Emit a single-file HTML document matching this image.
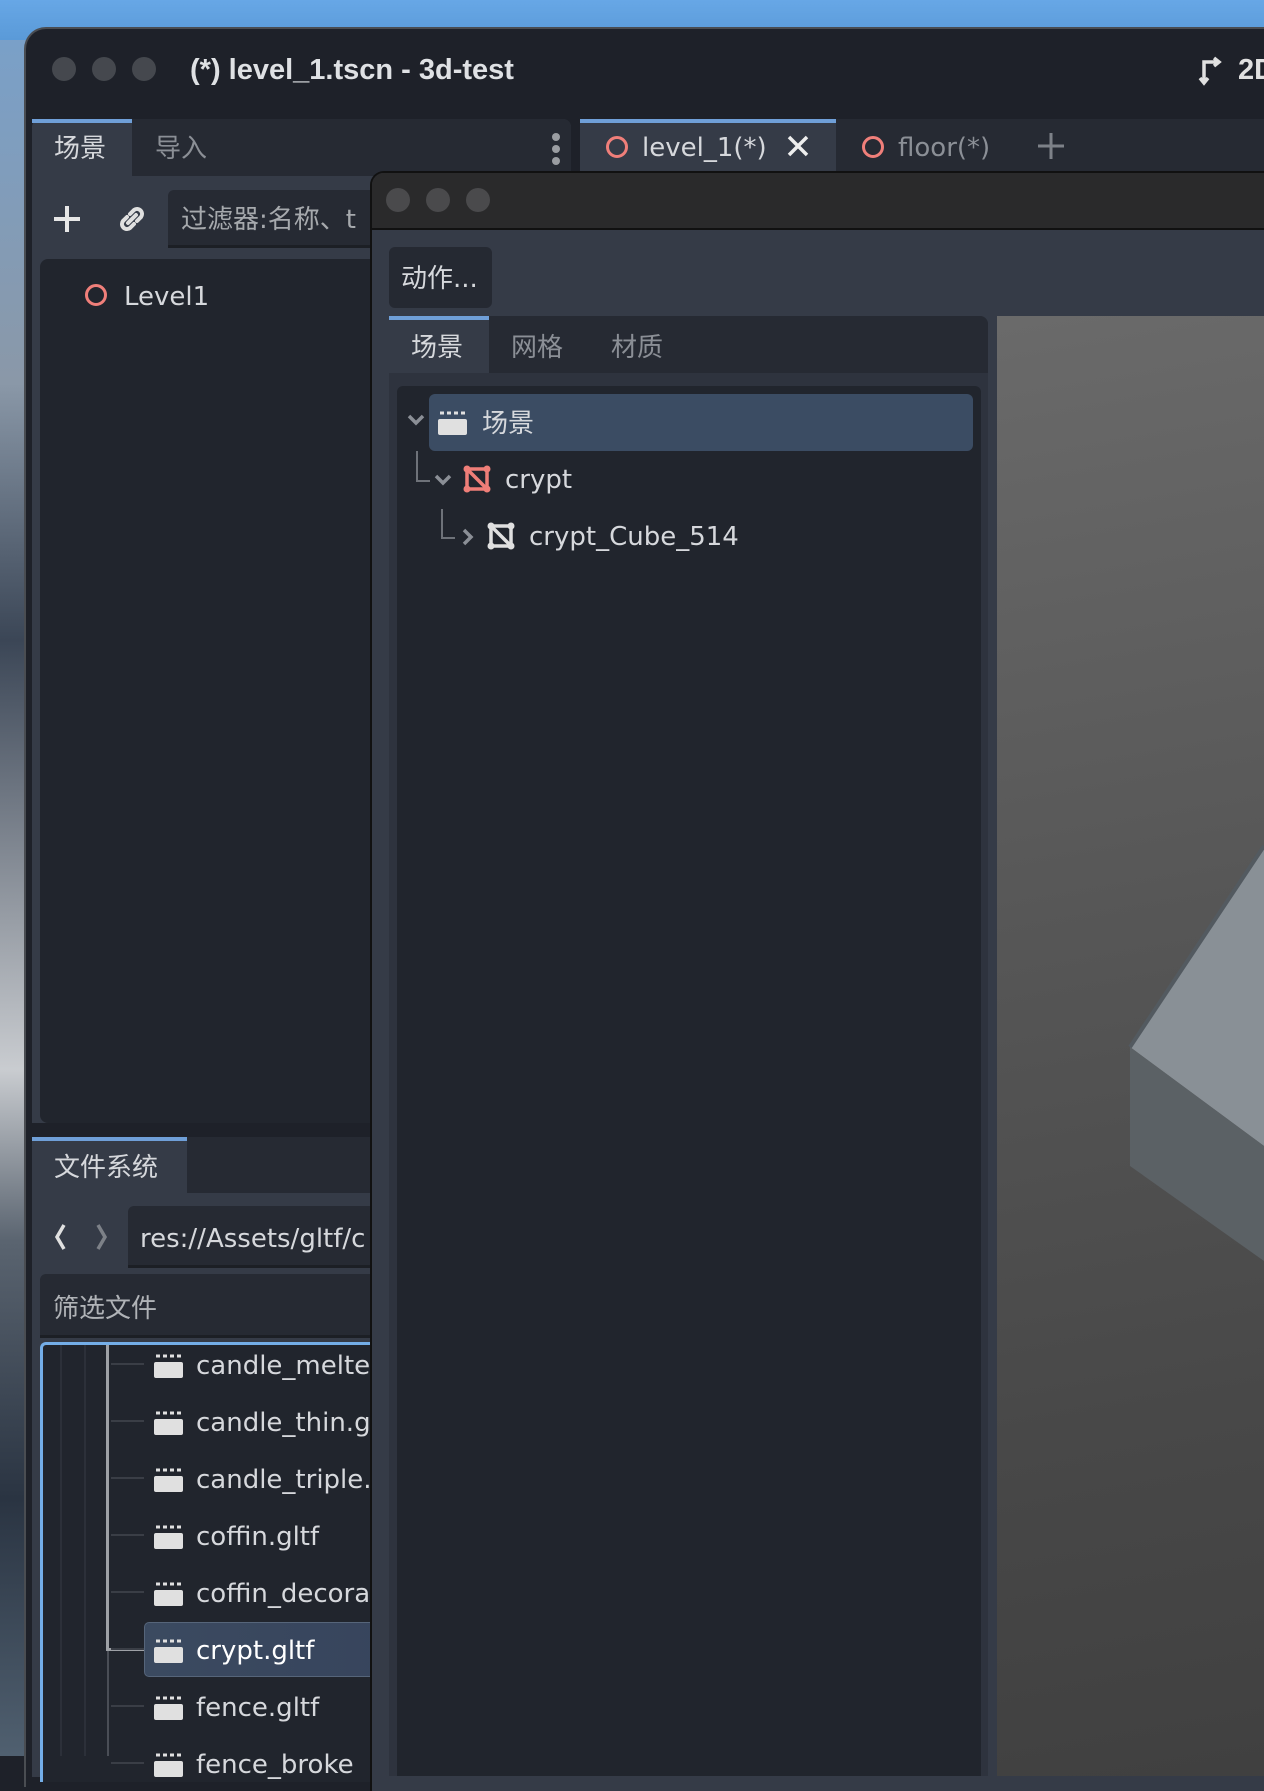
<!DOCTYPE html>
<html style="background:#1e2129"><head><meta charset="utf-8"><style>
*{margin:0;padding:0;box-sizing:border-box}
body{width:1264px;height:1756px;overflow:hidden;position:relative;font-family:"DejaVu Sans","Noto Sans CJK SC",sans-serif;background:#1e2129}
.a{position:absolute}
.t{position:absolute;white-space:nowrap;color:#d6d8dc;font-size:26px;line-height:30px}
.dim{color:#8b8f96}
.clap{position:absolute;width:29px;height:25px}
</style></head><body>
<div class="a" style="left:0;top:0;width:1264px;height:40px;background:linear-gradient(#67a7e6,#5a9ad8)"></div>
<div class="a" style="left:0;top:40px;width:30px;height:1716px;background:linear-gradient(180deg,#7aa0c8 0%,#8a98a8 20%,#3b4656 35%,#c9ccd0 60%,#5a6470 70%,#2a3442 85%,#506070 100%)"></div>
<div class="a" style="left:24px;top:27px;width:1260px;height:1760px;background:#1e2129;border-radius:22px 0 0 0;border:2px solid #4a4d52;border-right:none;border-bottom:none"></div>
<div class="a" style="left:52px;top:57px;width:24px;height:24px;border-radius:50%;background:#45484e"></div>
<div class="a" style="left:92px;top:57px;width:24px;height:24px;border-radius:50%;background:#45484e"></div>
<div class="a" style="left:132px;top:57px;width:24px;height:24px;border-radius:50%;background:#45484e"></div>
<div class="t" style="left:190px;top:55px;font-family:'Liberation Sans',sans-serif;font-weight:bold;font-size:29px;color:#dfe1e4">(*) level_1.tscn - 3d-test</div>
<svg class="a" style="left:1196px;top:56px" width="34" height="30" viewBox="0 0 34 30"><path d="M8 27V6h14M18 2l5 4-5 4M4 22l4 5 4-5" stroke="#e0e0e0" stroke-width="3.5" fill="none"/></svg>
<div class="t" style="left:1238px;top:55px;font-family:'Liberation Sans',sans-serif;font-weight:bold;font-size:29px;color:#e0e0e0">2D</div>
<div class="a" style="left:32px;top:119px;width:539px;height:1004px;background:#353b47;border-radius:8px 8px 0 0"></div>
<div class="a" style="left:132px;top:119px;width:439px;height:57px;background:#262a33;border-radius:0 8px 0 0"></div>
<div class="a" style="left:32px;top:119px;width:100px;height:4px;background:#6f9fd8"></div>
<div class="t" style="left:54px;top:134px">场景</div>
<div class="t dim" style="left:155px;top:134px">导入</div>
<div class="a" style="left:552px;top:133px;width:8px;height:8px;border-radius:50%;background:#9a9da2;box-shadow:0 12px 0 #9a9da2,0 24px 0 #9a9da2"></div>
<svg class="a" style="left:52px;top:204px" width="30" height="30"><path d="M15 2v26M2 15h26" stroke="#e6e6e6" stroke-width="4"/></svg>
<svg class="a" style="left:117px;top:204px" width="30" height="30" viewBox="0 0 30 30"><path d="M13 10l4-4a5 5 0 017 7l-4 4M17 20l-4 4a5 5 0 01-7-7l4-4M11 19l8-8" stroke="#e0e0e0" stroke-width="4" fill="none" stroke-linecap="round"/></svg>
<div class="a" style="left:168px;top:190px;width:400px;height:58px;background:#262a33;border-radius:6px 0 0 0;border-bottom:3px solid #1c1f25"></div>
<div class="t dim" style="left:181px;top:205px;color:#a6a9ad">过滤器:名称、t</div>
<div class="a" style="left:40px;top:259px;width:530px;height:864px;background:#21252d;border-radius:8px 0 0 8px"></div>
<div class="a" style="left:85px;top:284px;width:22px;height:22px;border-radius:50%;border:3.5px solid #f07f7a"></div>
<div class="t" style="left:124px;top:282px">Level1</div>
<div class="a" style="left:32px;top:1137px;width:539px;height:640px;background:#353b47"></div>
<div class="a" style="left:187px;top:1137px;width:384px;height:56px;background:#262a33"></div>
<div class="a" style="left:32px;top:1137px;width:155px;height:4px;background:#6f9fd8"></div>
<div class="t" style="left:54px;top:1153px">文件系统</div>
<svg class="a" style="left:50px;top:1222px" width="60" height="30"><path d="M14 3l-7 12 7 12" stroke="#e0e0e0" stroke-width="3.5" fill="none"/><path d="M48 3l7 12-7 12" stroke="#7d8188" stroke-width="3.5" fill="none"/></svg>
<div class="a" style="left:128px;top:1206px;width:443px;height:62px;background:#262a33;border-radius:6px 0 0 0;border-bottom:3px solid #1c1f25"></div>
<div class="t" style="left:140px;top:1224px">res://Assets/gltf/c</div>
<div class="a" style="left:40px;top:1274px;width:531px;height:64px;background:#262a33;border-radius:6px 0 0 0;border-bottom:3px solid #1c1f25"></div>
<div class="t dim" style="left:53px;top:1294px;color:#b0b3b7">筛选文件</div>
<div class="a" style="left:40px;top:1342px;width:531px;height:440px;background:#21252d;border:3px solid #74aee8;border-right:none;border-bottom:none;border-radius:6px 0 0 0"></div>
<div class="a" style="left:60px;top:1345px;width:2px;height:411px;background:#2c3039"></div>
<div class="a" style="left:84px;top:1345px;width:2px;height:411px;background:#2c3039"></div>
<div class="a" style="left:106px;top:1345px;width:3px;height:304px;background:#9ea1a6"></div>
<div class="a" style="left:106px;top:1648px;width:39px;height:3px;background:#9ea1a6"></div>
<div class="a" style="left:107px;top:1651px;width:2px;height:105px;background:#4a4e56"></div>
<div class="a" style="left:144px;top:1622px;width:427px;height:55px;background:linear-gradient(90deg,#3b4a60,#34405a);border:1px solid #56657a;border-right:none;border-radius:5px 0 0 5px"></div>
<div id="files"></div>
<div class="a" style="left:580px;top:119px;width:684px;height:52px;background:#262a33"></div>
<div class="a" style="left:580px;top:119px;width:256px;height:52px;background:#353b47"></div>
<div class="a" style="left:580px;top:119px;width:256px;height:4px;background:#6f9fd8"></div>
<div class="a" style="left:606px;top:136px;width:22px;height:22px;border-radius:50%;border:3.5px solid #f07f7a"></div>
<div class="t" style="left:642px;top:133px">level_1(*)</div>
<svg class="a" style="left:786px;top:134px" width="24" height="24"><path d="M3 3l18 18M21 3L3 21" stroke="#eee" stroke-width="3.5"/></svg>
<div class="a" style="left:862px;top:136px;width:22px;height:22px;border-radius:50%;border:3.5px solid #f07f7a"></div>
<div class="t dim" style="left:898px;top:133px">floor(*)</div>
<svg class="a" style="left:1036px;top:131px" width="30" height="30"><path d="M15 2v26M2 15h26" stroke="#7d8188" stroke-width="3"/></svg>
<div class="a" style="left:370px;top:171px;width:900px;height:1620px;background:#353b47;border:2px solid #111;border-right:none;border-bottom:none;border-radius:14px 0 0 0;overflow:hidden">
 <div class="a" style="left:0;top:0;width:900px;height:57px;background:#2a2a2b;border-bottom:2px solid #111"></div>
</div>
<div class="a" style="left:386px;top:188px;width:24px;height:24px;border-radius:50%;background:#4a4a4c"></div>
<div class="a" style="left:426px;top:188px;width:24px;height:24px;border-radius:50%;background:#4a4a4c"></div>
<div class="a" style="left:466px;top:188px;width:24px;height:24px;border-radius:50%;background:#4a4a4c"></div>
<div class="a" style="left:389px;top:247px;width:103px;height:61px;background:#252932;border-radius:6px"></div>
<div class="t" style="left:401px;top:264px">动作...</div>
<div class="a" style="left:389px;top:316px;width:599px;height:1460px;background:#2e333e;border-radius:0 8px 0 0"></div>
<div class="a" style="left:489px;top:316px;width:499px;height:57px;background:#262a33;border-radius:0 8px 0 0"></div>
<div class="a" style="left:389px;top:316px;width:100px;height:57px;background:#353b47"></div>
<div class="a" style="left:389px;top:316px;width:100px;height:4px;background:#6f9fd8"></div>
<div class="t" style="left:411px;top:333px">场景</div>
<div class="t dim" style="left:511px;top:333px">网格</div>
<div class="t dim" style="left:611px;top:333px">材质</div>
<div class="a" style="left:397px;top:386px;width:584px;height:1390px;background:#21252d;border-radius:6px 6px 0 0"></div>
<div class="a" style="left:429px;top:394px;width:544px;height:57px;background:#3b4c63;border-radius:6px"></div>
<svg class="a" style="left:406px;top:412px" width="20" height="16"><path d="M3 4l7 7 7-7" stroke="#8b8f96" stroke-width="3.5" fill="none"/></svg>
<svg class="clap" style="left:438px;top:410px" viewBox="0 0 29 25"><rect x="0" y="9" width="29" height="16" rx="2" fill="#e0e0e0"/><path d="M2 3h4M9 3h4M16 3h4M23 3h4" stroke="#e0e0e0" stroke-width="3"/></svg>
<div class="t" style="left:482px;top:409px">场景</div>
<div class="a" style="left:416px;top:451px;width:2px;height:30px;background:#6e7279"></div>
<div class="a" style="left:416px;top:480px;width:14px;height:2px;background:#6e7279"></div>
<svg class="a" style="left:433px;top:472px" width="20" height="16"><path d="M3 4l7 7 7-7" stroke="#8b8f96" stroke-width="3.5" fill="none"/></svg>
<svg class="a" style="left:463px;top:465px" width="28" height="28" viewBox="0 0 28 28"><rect x="4" y="4" width="20" height="20" fill="none" stroke="#ef7e78" stroke-width="3.5"/><path d="M4 4l20 20" stroke="#ef7e78" stroke-width="3.5"/><circle cx="4" cy="4" r="3.5" fill="#ef7e78"/><circle cx="24" cy="4" r="3.5" fill="#ef7e78"/><circle cx="4" cy="24" r="3.5" fill="#ef7e78"/><circle cx="24" cy="24" r="3.5" fill="#ef7e78"/></svg>
<div class="t" style="left:505px;top:465px">crypt</div>
<div class="a" style="left:441px;top:509px;width:2px;height:29px;background:#6e7279"></div>
<div class="a" style="left:441px;top:537px;width:14px;height:2px;background:#6e7279"></div>
<svg class="a" style="left:460px;top:527px" width="16" height="20"><path d="M4 3l7 7-7 7" stroke="#8b8f96" stroke-width="3.5" fill="none"/></svg>
<svg class="a" style="left:487px;top:522px" width="28" height="28" viewBox="0 0 28 28"><rect x="4" y="4" width="20" height="20" fill="none" stroke="#e0e0e0" stroke-width="3.5"/><path d="M4 4l20 20" stroke="#e0e0e0" stroke-width="3.5"/><circle cx="4" cy="4" r="3.5" fill="#e0e0e0"/><circle cx="24" cy="4" r="3.5" fill="#e0e0e0"/><circle cx="4" cy="24" r="3.5" fill="#e0e0e0"/><circle cx="24" cy="24" r="3.5" fill="#e0e0e0"/></svg>
<div class="t" style="left:529px;top:522px">crypt_Cube_514</div>
<div class="a" style="left:997px;top:316px;width:267px;height:1460px;background:linear-gradient(170deg,#6a6a6a 0%,#575757 40%,#484848 75%,#404040 100%)"></div>
<svg class="a" style="left:997px;top:316px" width="267" height="1440"><polygon points="133,731 267,530 267,830" fill="#899096"/><polygon points="133,731 267,830 267,945 133,850" fill="#5b6165"/><path d="M133,731 L267,530" stroke="#535a60" stroke-width="4"/></svg>
<script>
var f=["candle_melte","candle_thin.g","candle_triple.","coffin.gltf","coffin_decora","crypt.gltf","fence.gltf","fence_broke"],h="";
for(var i=0;i<f.length;i++){var y=1351+i*57;
h+='<div class="a" style="left:111px;top:'+(y+12)+'px;width:33px;height:2px;background:#3a3e46"></div>';
h+='<svg class="clap" style="left:154px;top:'+(y+2)+'px" viewBox="0 0 29 25"><rect x="0" y="9" width="29" height="16" rx="2" fill="#e0e0e0"/><path d="M2 3h4M9 3h4M16 3h4M23 3h4" stroke="#e0e0e0" stroke-width="3"/></svg>';
h+='<div class="t" style="left:196px;top:'+y+'px;'+(i==5?'color:#fff':'')+'">'+f[i]+'</div>';}
document.getElementById('files').outerHTML=h;
</script>
</body></html>
